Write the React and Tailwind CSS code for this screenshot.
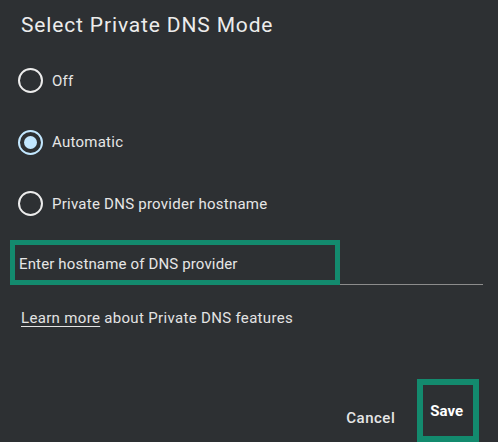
import React from "react";

function Radio({ checked }) {
  if (checked) {
    return (
      <span className="flex h-[25px] w-[25px] shrink-0 items-center justify-center rounded-full border-[2.5px] border-[#c2e7ff]">
        <span className="h-[13px] w-[13px] rounded-full bg-[#c2e7ff]" />
      </span>
    );
  }
  return <span className="block h-[25px] w-[25px] shrink-0 rounded-full border-[2.5px] border-[#ececec]" />;
}

function Option({ label, checked }) {
  return (
    <div className="flex h-[61.5px] items-center gap-[9px]">
      <Radio checked={checked} />
      <span className="text-[15px] leading-[20px] tracking-[0.25px] text-[#e6e6e6]">{label}</span>
    </div>
  );
}

export default function App() {
  return (
    <div
      className="relative flex h-[442px] w-[498px] flex-col overflow-hidden bg-[#2d3033]"
      style={{ fontFamily: "Roboto, 'Noto Sans', sans-serif" }}
    >
      <h1 className="pl-[21px] pt-[11px] text-[21px] leading-[28px] tracking-[0.85px] text-[#ececec]">Select Private DNS Mode</h1>

      <div className="mt-[11px] pl-[18px]">
        <Option label="Off" />
        <Option label="Automatic" checked />
        <Option label="Private DNS provider hostname" />
      </div>

      <div className="ml-[19px] mt-[19.75px] w-[464px] border-b border-[#8c8c8c] pb-[10px]">
        <div className="text-[15px] leading-[20px] tracking-[0.15px] text-[#e6e6e6]">Enter hostname of DNS provider</div>
      </div>

      <p className="ml-[21px] mt-[23px] text-[15px] leading-[20px] tracking-[0.33px] text-[#e3e3e3]">
        <span className="underline underline-offset-[3px]">Learn more</span> about Private DNS features
      </p>

      <div className="mt-[73px] flex items-start justify-end pr-[35px]">
        <button className="mt-[7px] text-[15px] font-medium leading-[20px] tracking-[0.5px] text-[#e6e6e6]">Cancel</button>
        <button className="ml-[35px] text-[15px] font-bold leading-[20px] text-white">Save</button>
      </div>

      <div className="absolute left-[10px] top-[240px] h-[45px] w-[330px] border-[5.5px] border-[#138a6e]" />
      <div className="absolute left-[417px] top-[379px] h-[63px] w-[62px] border-[6px] border-[#138a6e]" />
    </div>
  );
}
